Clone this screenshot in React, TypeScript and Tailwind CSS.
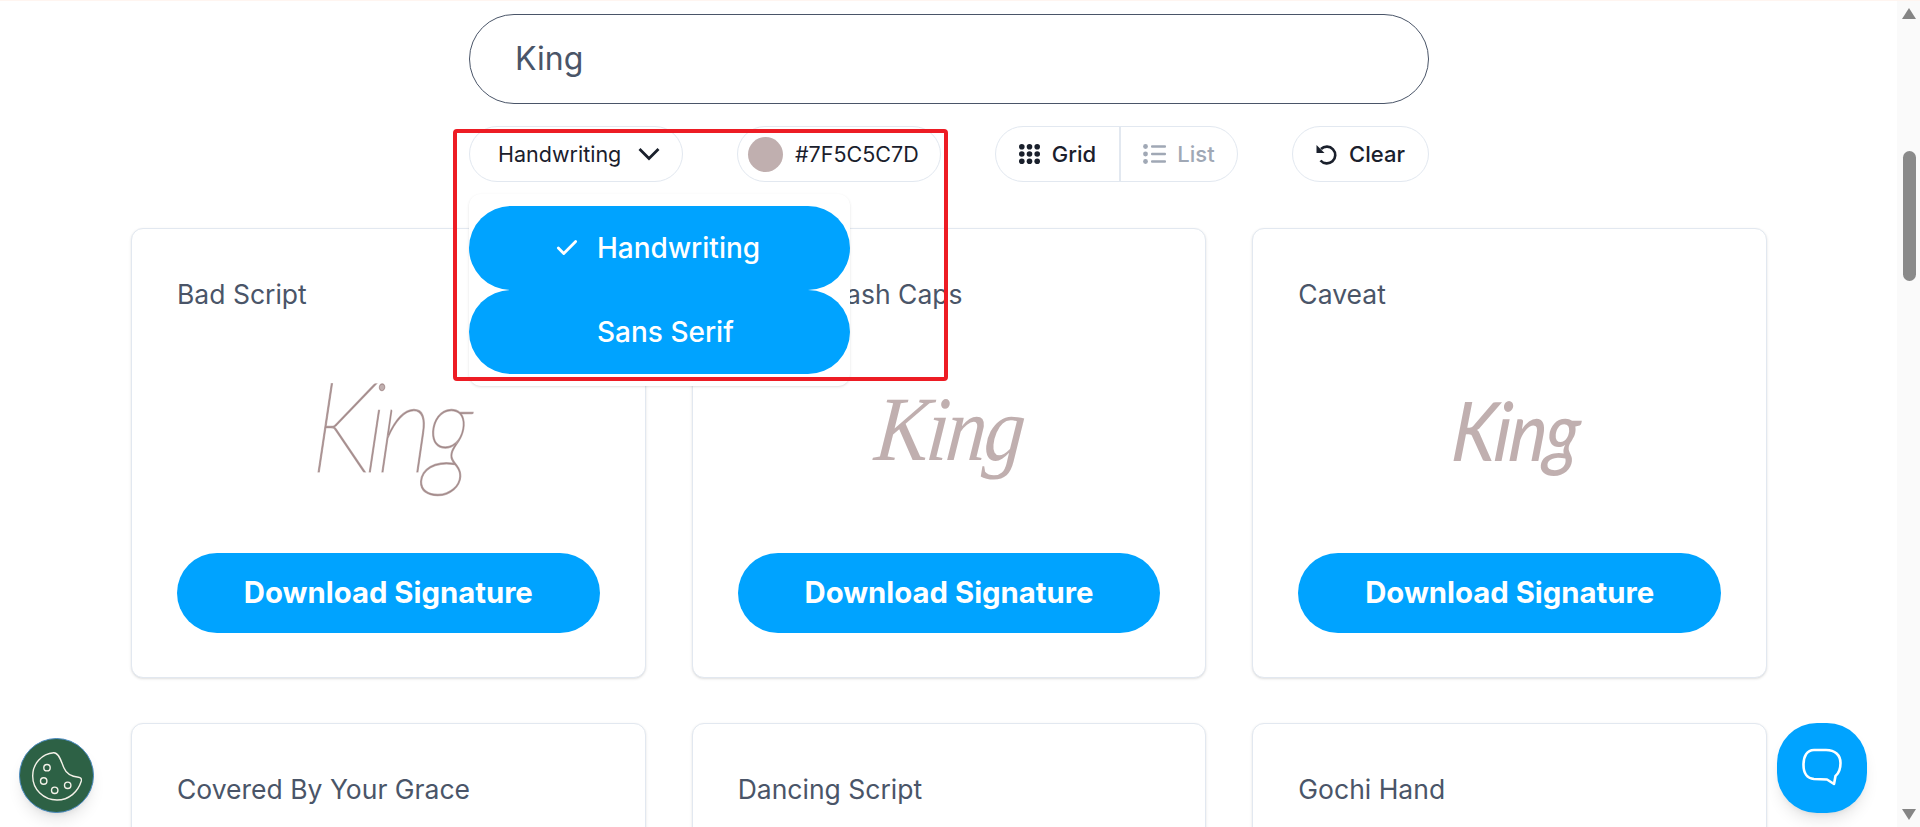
import { Check } from "lucide-react";

const fontList = [
  { title: "Bad Script", sign: "font-['Lato',sans-serif] font-thin [-webkit-text-stroke:1.200px_#7F5C5C7D] text-[126px] tracking-[-9px] -skew-x-3 scale-x-[0.85] -translate-y-[5px]" },
  { title: "Bilbo Swash Caps", sign: "font-['Liberation_Serif',serif] text-[92px] tracking-[-3px] -skew-x-6 scale-x-[0.88]" },
  { title: "Caveat", sign: "font-['Lato',sans-serif] font-medium text-[82px] tracking-[-2px] -skew-x-6 scale-x-[0.86] translate-x-[6px]" },
];
const secondRow = ["Covered By Your Grace", "Dancing Script", "Gochi Hand"];

function GridDots() {
  return (
    <svg width="21" height="20" viewBox="0 0 21 20" className="fill-current text-[#1a202c]">
      {[2.800, 10, 17.200].map((y) =>
        [2.800, 10.500, 18.200].map((x) => <circle key={`${x}-${y}`} cx={x} cy={y} r="2.800" />)
      )}
    </svg>
  );
}

function ListLines() {
  return (
    <svg width="23" height="20" viewBox="0 0 23 20" className="text-[#a0a8b5]">
      {[2.500, 10, 17.500].map((y) => (
        <g key={y}>
          <circle cx="2.500" cy={y} r="2.400" fill="currentColor" />
          <rect x="8" y={y - 1.300} width="15" height="2.600" rx="1" fill="currentColor" />
        </g>
      ))}
    </svg>
  );
}

function UndoIcon() {
  return (
    <svg width="22" height="21" viewBox="0 0 22 21" fill="none" className="text-[#1a202c]">
      <path d="M0.500 1V9H8.500Z" fill="currentColor" />
      <path d="M5 5A8.400 8.400 0 1 1 4.500 16.500" stroke="currentColor" strokeWidth="2.600" />
    </svg>
  );
}

function CookieIcon() {
  return (
    <svg width="50" height="50" viewBox="0 0 50 50" fill="none" stroke="#f4f1e8" strokeWidth="1.400">
      <path d="M21.700 1.700C10 2.500 0.700 12.500 0.700 25C0.700 38.500 11.500 49 25 49C37 49 46 41 49.300 30C49.800 27.500 48.500 26.500 46.500 26.200C39 25.500 34 22 32 17C29.500 12 27.500 1.500 21.700 1.700Z" />
      <circle cx="15" cy="16.700" r="3.200" />
      <circle cx="11.700" cy="30" r="3.200" />
      <circle cx="22.700" cy="39.300" r="3.200" />
      <circle cx="35.700" cy="34.300" r="3.200" />
    </svg>
  );
}

function ChatIcon() {
  return (
    <svg width="40" height="40" viewBox="0 0 40 40" fill="none" stroke="#fff" strokeWidth="2.600" strokeLinejoin="round">
      <path d="M12 2H24C33 2 38.500 7 38.500 15C38.500 21 36.500 25.500 33.500 28L32 36L25 31.500L12 31C5 30.500 1.500 25 1.500 17C1.500 8 5 2 12 2Z" />
    </svg>
  );
}

function Card({ title, sign }: { title: string; sign?: string }) {
  return (
    <div className="h-[450px] rounded-xl border border-[#e2e8f0] bg-white px-[45px] pt-[49px] shadow-sm">
      <div className="text-[26.500px] leading-8 text-[#4a5568]">{title}</div>
      {sign && (
        <>
          <div className="mb-[27px] mt-[21px] flex h-[195px] items-center justify-center">
            <span className={`italic leading-none text-[#7F5C5C7D] ${sign}`}>King</span>
          </div>
          <button className="h-[80px] w-full rounded-[40px] bg-[#00a3ff] text-[29.300px] font-bold text-white">
            Download Signature
          </button>
        </>
      )}
    </div>
  );
}

export default function App() {
  return (
    <div className="relative flex h-[827px] overflow-hidden border-t border-[#fff5f0] bg-white font-['Inter',sans-serif]">
      <main className="w-[1897px] shrink-0">
        <div className="ml-[469px] w-[960px] pt-[13px]">
          <div className="flex h-[90px] items-center rounded-full border border-[#4a5568] px-[45px] text-[32px] text-[#4a5568]">
            King
          </div>
          <div className="mt-[22px] flex items-center justify-between text-[21.500px] text-[#1a202c]">
            <button className="flex h-[56px] w-[214px] items-center gap-[17px] rounded-full border border-[#e2e8f0] pl-[28px]">
              Handwriting
              <svg width="22" height="14" viewBox="0 0 22 14" fill="none" stroke="currentColor" strokeWidth="2.800">
                <path d="M1.500 2L11 11.500L20.500 2" />
              </svg>
            </button>
            <button className="flex h-[56px] w-[204px] items-center gap-[12px] rounded-full border border-[#e2e8f0] pl-[10px]">
              <span className="h-[35px] w-[35px] rounded-full bg-[#7F5C5C7D]" />
              #7F5C5C7D
            </button>
            <div className="flex h-[56px] w-[243px] rounded-full border border-[#e2e8f0] text-[22px] font-medium">
              <button className="flex w-[125px] items-center justify-center gap-[12px] border-r-2 border-[#e2e8f0]">
                <GridDots />
                Grid
              </button>
              <button className="flex flex-1 items-center justify-center gap-[11px] text-[#a0a8b5]">
                <ListLines />
                List
              </button>
            </div>
            <button className="flex h-[56px] w-[137px] items-center justify-center gap-[11px] rounded-full border border-[#e2e8f0] text-[22px] font-medium">
              <UndoIcon />
              Clear
            </button>
          </div>
        </div>
        <div className="ml-[131px] mt-[46px] grid w-[1636px] grid-cols-3 gap-x-[46px] gap-y-[45px]">
          {fontList.map((f) => (
            <Card key={f.title} title={f.title} sign={f.sign} />
          ))}
          {secondRow.map((t) => (
            <Card key={t} title={t} />
          ))}
        </div>
      </main>

      <aside className="flex flex-1 flex-col items-center justify-between bg-[#fafafa] py-[7px] pl-[1px]">
        <div className="flex w-full flex-col items-center">
          <div className="h-0 w-0 border-x-[7px] border-b-[11px] border-x-transparent border-b-[#858585]" />
          <div className="mt-[132px] h-[130px] w-[13px] rounded-full bg-[#8a8a8a]" />
        </div>
        <div className="h-0 w-0 border-x-[7px] border-t-[11px] border-x-transparent border-t-[#858585]" />
      </aside>

      {/* dropdown + annotation box sit on top of the cards */}
      <div className="absolute left-[469px] top-[193px] w-[381px] rounded-xl bg-white py-[12px] text-[28px] font-medium text-white shadow-sm">
        <div className="relative flex h-[84px] items-center rounded-[42px] bg-[#00a3ff] pl-[128px]">
          <Check size={26} strokeWidth={2.600} className="absolute left-[85px] top-[29px]" />
          Handwriting
        </div>
        <div className="flex h-[84px] items-center rounded-[42px] bg-[#00a3ff] pl-[128px]">Sans Serif</div>
      </div>
      <div className="absolute left-[453px] top-[128px] h-[252px] w-[495px] rounded-sm border-4 border-[#ed1c24]" />

      <button className="absolute left-[19px] top-[737px] flex h-[75px] w-[75px] items-center justify-center rounded-full border border-[#4a8ac0] bg-[#2d6145] shadow-lg">
        <CookieIcon />
      </button>
      <button className="absolute left-[1777px] top-[722px] flex h-[90px] w-[90px] items-center justify-center rounded-[40px] bg-[#00a3ff] shadow-lg">
        <ChatIcon />
      </button>
    </div>
  );
}
